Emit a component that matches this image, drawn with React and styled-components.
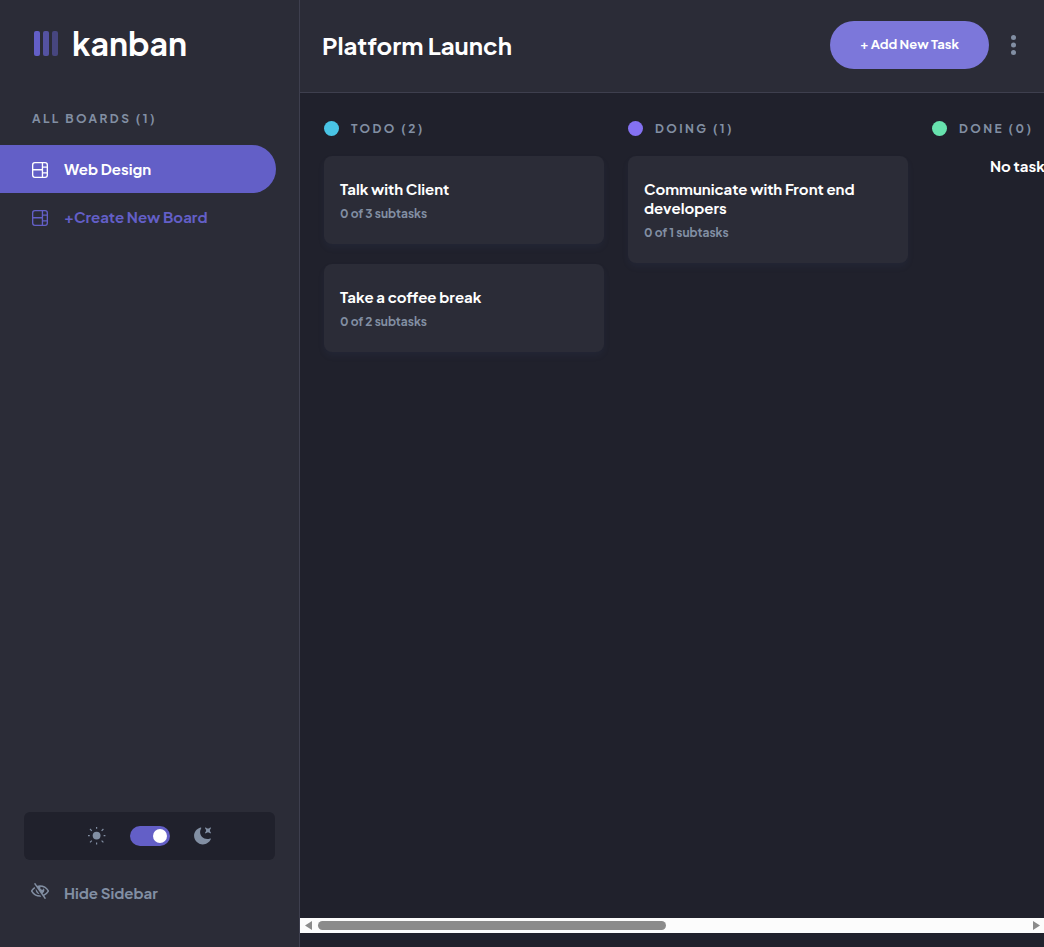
import React, { useState } from "react";
import styled, { createGlobalStyle } from "styled-components";

const c = {
  panel: "#2b2c37",
  page: "#20212c",
  line: "#3e3f4e",
  purple: "#635fc7",
  purpleLight: "#7c77da",
  grey: "#828fa3",
};

const GlobalStyle = createGlobalStyle`
  *, *::before, *::after { box-sizing: border-box; }
  body {
    margin: 0;
    background: ${c.page};
    color: #fff;
    font-family: "Plus Jakarta Sans", Inter, "Liberation Sans", sans-serif;
  }
  h1, h2, h3, p, ul { margin: 0; padding: 0; }
  ul { list-style: none; }
  button { font-family: inherit; border: 0; background: none; padding: 0; cursor: pointer; }
`;

const Shell = styled.div`
  display: flex;
  min-height: 100vh;
`;

const Sidebar = styled.aside`
  flex: 0 0 300px;
  display: flex;
  flex-direction: column;
  background: ${c.panel};
  border-right: 1px solid ${c.line};
`;

const Brand = styled.a`
  display: flex;
  align-items: center;
  gap: 14px;
  height: 86px;
  padding-left: 34px;
  color: #fff;
  font-size: 32px;
  font-weight: 700;
  line-height: 40px;
  text-decoration: none;
`;

const Label = styled.h2`
  color: ${c.grey};
  font-size: 12px;
  font-weight: 700;
  line-height: 15px;
  letter-spacing: 0.2em;
`;

const Boards = styled.nav`
  padding-top: 25px;

  ${Label} {
    padding: 0 32px 19px;
  }
`;

const BoardButton = styled.button`
  display: flex;
  align-items: center;
  gap: 16px;
  width: calc(100% - 23px);
  height: 48px;
  padding-left: 32px;
  border-radius: 0 100px 100px 0;
  background: ${(p) => (p.$active ? c.purple : "transparent")};
  color: ${(p) => (p.$active ? "#fff" : c.purple)};
  font-size: 15px;
  font-weight: 700;
  line-height: 19px;

  svg {
    margin-top: 2px;
  }

  span {
    padding-bottom: 2px;
  }
`;

const SidebarFooter = styled.div`
  margin-top: auto;
  padding: 0 24px 44px;
`;

const ThemeBox = styled.div`
  display: flex;
  align-items: center;
  justify-content: center;
  gap: 24px;
  height: 48px;
  border-radius: 6px;
  background: ${c.page};
  color: ${c.grey};
`;

const Toggle = styled.input`
  appearance: none;
  display: flex;
  align-items: center;
  justify-content: ${(p) => (p.checked ? "flex-end" : "flex-start")};
  width: 40px;
  height: 20px;
  margin: 0;
  padding: 0 3px;
  border-radius: 10px;
  background: ${c.purple};
  cursor: pointer;

  &::before {
    content: "";
    width: 14px;
    height: 14px;
    border-radius: 50%;
    background: #fff;
  }
`;

const HideButton = styled.button`
  display: flex;
  align-items: flex-start;
  gap: 15px;
  height: 20px;
  margin-top: 23px;
  padding-left: 7px;
  color: ${c.grey};
  font-size: 15px;
  font-weight: 700;
  line-height: 19px;
`;

const Main = styled.main`
  flex: 1;
  min-width: 0;
  display: flex;
  flex-direction: column;
  padding-bottom: 14px;
`;

const Header = styled.header`
  display: flex;
  align-items: center;
  height: 93px;
  padding: 0 24px 2px 22px;
  background: ${c.panel};
  border-bottom: 1px solid ${c.line};
`;

const Title = styled.h1`
  flex: 1;
  font-size: 24px;
  font-weight: 700;
  line-height: 30px;
`;

const AddButton = styled.button`
  height: 48px;
  padding: 0 30px 2px;
  border-radius: 24px;
  background: ${c.purpleLight};
  color: #fff;
  font-size: 13px;
  font-weight: 700;
  line-height: 16px;
`;

const HeaderActions = styled.div`
  display: flex;
  align-items: center;
  gap: 18px;
`;

const MenuButton = styled.button`
  display: flex;
  justify-content: center;
  width: 13px;
`;

const Board = styled.div`
  flex: 1;
  display: flex;
  gap: 24px;
  padding: 28px 24px;
  overflow: hidden;
`;

const Column = styled.section`
  flex: 0 0 280px;
`;

const ColumnHead = styled.div`
  display: flex;
  align-items: center;
  gap: 12px;
  margin-bottom: 20px;
`;

const Dot = styled.span`
  width: 15px;
  height: 15px;
  border-radius: 50%;
  background: ${(p) => p.$color};
`;

const Cards = styled.ul`
  display: flex;
  flex-direction: column;
  gap: 20px;
`;

const Card = styled.li`
  padding: 23px 16px;
  border-radius: 8px;
  background: ${c.panel};
  box-shadow: 0 4px 6px rgba(54, 78, 126, 0.1);
`;

const CardTitle = styled.h3`
  font-size: 15px;
  font-weight: 700;
  line-height: 19px;
`;

const CardMeta = styled.p`
  margin-top: 8px;
  color: ${c.grey};
  font-size: 12px;
  font-weight: 700;
  line-height: 15px;
`;

const Empty = styled.p`
  width: 164px;
  margin: 0 auto;
  font-size: 15px;
  font-weight: 700;
  line-height: 20px;
`;

const ScrollBar = styled.div`
  display: flex;
  align-items: center;
  height: 15px;
  background: #fcfcfc;
`;

const ScrollArrow = styled.button`
  display: flex;
  flex: 0 0 ${(p) => p.$size};
  justify-content: center;
`;

const Track = styled.div`
  flex: 1;
`;

const Thumb = styled.div`
  width: 49%;
  height: 9px;
  border-radius: 5px;
  background: #8b8b8b;
`;

const LogoMark = () => (
  <svg width="24" height="25" viewBox="0 0 24 25" fill={c.purple} aria-hidden="true">
    <rect width="6" height="25" rx="2" />
    <rect x="9" width="6" height="25" rx="2" opacity=".75" />
    <rect x="18" width="6" height="25" rx="2" opacity=".5" />
  </svg>
);

const BoardIcon = () => (
  <svg width="16" height="16" viewBox="0 0 16 16" fill="currentColor" aria-hidden="true">
    <path d="M0 2.889A2.889 2.889 0 0 1 2.889 0H13.11A2.889 2.889 0 0 1 16 2.889V13.11A2.888 2.888 0 0 1 13.111 16H2.89A2.889 2.889 0 0 1 0 13.111V2.89Zm1.333 5.555v4.667c0 .859.697 1.556 1.556 1.556h6.889V8.444H1.333Zm8.445-1.333V1.333h-6.89A1.556 1.556 0 0 0 1.334 2.89V7.11h8.445Zm4.889-1.333H11.11v4.444h3.556V5.778Zm0 5.778H11.11v3.11h2a1.556 1.556 0 0 0 1.556-1.555v-1.555Zm0-7.112V2.89a1.555 1.555 0 0 0-1.556-1.556h-2v3.111h3.556Z" />
  </svg>
);

const SunIcon = () => (
  <svg width="18" height="18" viewBox="0 0 18 18" fill="none" stroke="currentColor" strokeWidth="1.2" aria-hidden="true">
    <circle cx="8.6" cy="8.6" r="3.9" fill="currentColor" stroke="none" />
    <path d="M8.6 0v1.8M8.6 15.6v1.8M0 8.6h1.8M15.6 8.6h1.8M2 2l1.8 1.8M13.6 13.6l1.8 1.8M2 15.4l1.8-1.8M13.6 3.8 15.4 2" />
  </svg>
);

const MoonIcon = () => (
  <svg width="18" height="18" viewBox="0.6 0.2 16 16" fill="currentColor" aria-hidden="true">
    <path d="M6.474.682c.434-.11.718.406.481.78A6.067 6.067 0 0 0 6.01 4.72c0 3.418 2.827 6.187 6.314 6.187.89.002 1.77-.182 2.584-.54.408-.18.894.165.724.57-1.16 2.775-3.944 4.73-7.194 4.73-4.292 0-7.771-3.41-7.771-7.615 0-3.541 2.466-6.518 5.807-7.37Zm8.433.07c.442-.294.969.232.674.674l-.525.787a1.943 1.943 0 0 0 0 2.157l.525.788c.295.441-.232.968-.674.673l-.787-.525a1.943 1.943 0 0 0-2.157 0l-.786.525c-.442.295-.97-.232-.675-.673l.525-.788a1.943 1.943 0 0 0 0-2.157l-.525-.787c-.295-.442.232-.968.674-.673l.787.525a1.943 1.943 0 0 0 2.157 0l.787-.525Z" />
  </svg>
);

const HideIcon = () => (
  <svg width="18" height="16" viewBox="0 0 18 16" fill="currentColor" aria-hidden="true">
    <path d="M8.522 11.223a4.252 4.252 0 0 1-3.654-5.22l3.654 5.22ZM9 12.25A8.685 8.685 0 0 1 1.5 8a8.612 8.612 0 0 1 2.76-2.864l-.86-1.23A10.112 10.112 0 0 0 .208 7.238a1.5 1.5 0 0 0 0 1.524A10.187 10.187 0 0 0 9 13.75c.414 0 .828-.025 1.239-.074l-1-1.43A8.88 8.88 0 0 1 9 12.25Zm8.792-3.488a10.14 10.14 0 0 1-4.486 4.046l1.504 2.148a.375.375 0 0 1-.092.523l-.648.453a.375.375 0 0 1-.523-.092L3.19 1.044A.375.375 0 0 1 3.282.52L3.93.068a.375.375 0 0 1 .523.092l1.735 2.479A10.308 10.308 0 0 1 9 2.25c3.746 0 7.031 2 8.792 4.988a1.5 1.5 0 0 1 0 1.524ZM16.5 8a8.674 8.674 0 0 0-6.755-4.219A1.75 1.75 0 1 0 12.75 5v-.001a4.25 4.25 0 0 1-1.154 5.366l.834 1.192A8.641 8.641 0 0 0 16.5 8Z" />
  </svg>
);

const DotsIcon = () => (
  <svg width="5" height="20" viewBox="0 0 5 20" fill={c.grey} aria-hidden="true">
    <circle cx="2.5" cy="2.5" r="2.5" />
    <circle cx="2.5" cy="10" r="2.5" />
    <circle cx="2.5" cy="17.5" r="2.5" />
  </svg>
);

const Arrow = ({ d }) => (
  <svg width="8" height="9" viewBox="0 0 8 9" fill="#8b8b8b" aria-hidden="true">
    <path d={d} />
  </svg>
);

const columns = [
  {
    name: "TODO",
    color: "#49c4e5",
    tasks: [
      { title: "Talk with Client", total: 3 },
      { title: "Take a coffee break", total: 2 },
    ],
  },
  {
    name: "DOING",
    color: "#8471f2",
    tasks: [{ title: "Communicate with Front end developers", total: 1 }],
  },
  { name: "DONE", color: "#67e2ae", tasks: [] },
];

export default function App() {
  const [dark, setDark] = useState(true);

  return (
    <>
      <GlobalStyle />
      <Shell>
        <Sidebar>
          <Brand href="#">
            <LogoMark />
            kanban
          </Brand>
          <Boards>
            <Label>ALL BOARDS (1)</Label>
            <BoardButton type="button" $active>
              <BoardIcon />
              <span>Web Design</span>
            </BoardButton>
            <BoardButton type="button">
              <BoardIcon />
              <span>+Create New Board</span>
            </BoardButton>
          </Boards>
          <SidebarFooter>
            <ThemeBox>
              <SunIcon />
              <Toggle
                type="checkbox"
                role="switch"
                aria-label="Dark theme"
                checked={dark}
                onChange={(e) => setDark(e.target.checked)}
              />
              <MoonIcon />
            </ThemeBox>
            <HideButton type="button">
              <HideIcon />
              Hide Sidebar
            </HideButton>
          </SidebarFooter>
        </Sidebar>
        <Main>
          <Header>
            <Title>Platform Launch</Title>
            <HeaderActions>
              <AddButton type="button">+ Add New Task</AddButton>
              <MenuButton type="button" aria-label="Board menu">
                <DotsIcon />
              </MenuButton>
            </HeaderActions>
          </Header>
          <Board>
            {columns.map((col) => (
              <Column key={col.name}>
                <ColumnHead>
                  <Dot $color={col.color} />
                  <Label>
                    {col.name} ({col.tasks.length})
                  </Label>
                </ColumnHead>
                {col.tasks.length ? (
                  <Cards>
                    {col.tasks.map((t) => (
                      <Card key={t.title}>
                        <CardTitle>{t.title}</CardTitle>
                        <CardMeta>0 of {t.total} subtasks</CardMeta>
                      </Card>
                    ))}
                  </Cards>
                ) : (
                  <Empty>No tasks</Empty>
                )}
              </Column>
            ))}
          </Board>
          <ScrollBar>
            <ScrollArrow type="button" aria-label="Scroll left" $size="18px">
              <Arrow d="M7 0v9L0 4.5Z" />
            </ScrollArrow>
            <Track>
              <Thumb />
            </Track>
            <ScrollArrow type="button" aria-label="Scroll right" $size="16px">
              <Arrow d="M1 0v9l7-4.5Z" />
            </ScrollArrow>
          </ScrollBar>
        </Main>
      </Shell>
    </>
  );
}
